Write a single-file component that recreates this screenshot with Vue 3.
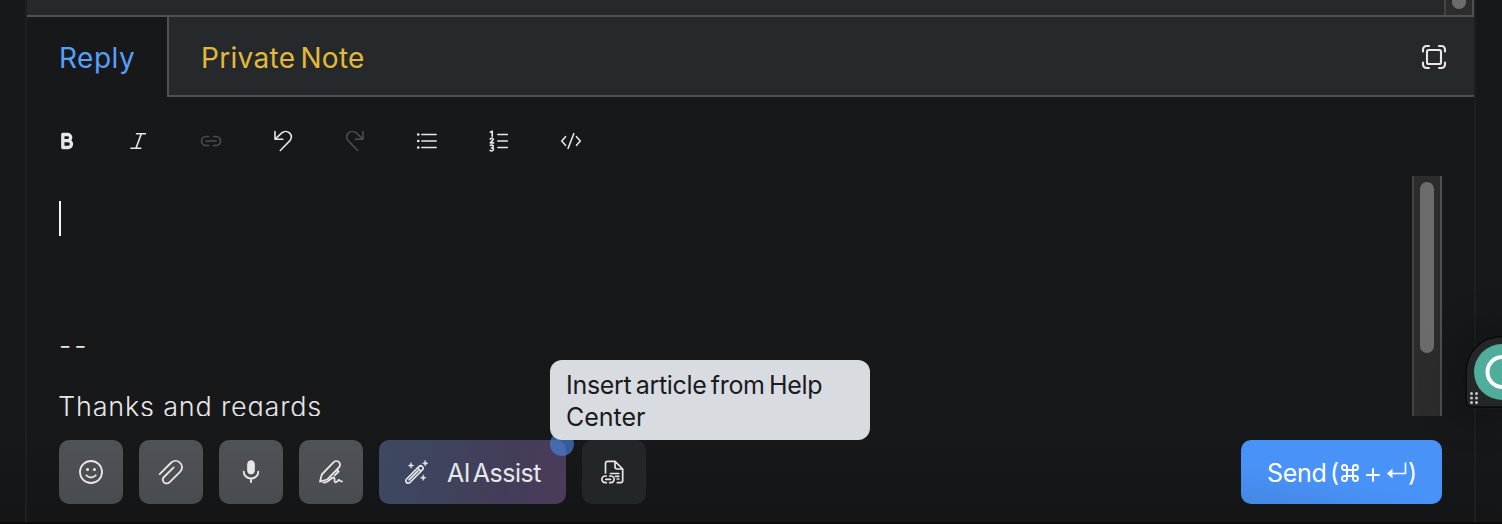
<script setup>
import { ref } from 'vue'

const signature = ['--', 'Thanks and regards']
const draft = ref('')
</script>

<template>
  <main class="page">
    <section class="card">
      <div class="thread"><div class="track thread-track"><i class="thumb"></i></div></div>

      <header class="tabs">
        <button class="tab active"><span class="t-reply">Reply</span></button>
        <div class="rest">
          <button class="tab note"><span class="t-note">Private Note</span></button>
          <button class="expand">
            <svg width="32" height="32" viewBox="0 0 32 32" class="ic" stroke-width="2.1">
              <rect x="9" y="9" width="14" height="14" rx="1.8" />
              <path d="M5 10.5V8.500A3.500 3.500 0 0 1 8.500 5H11M21 5h2.500A3.500 3.500 0 0 1 27 8.500v2M27 21.500v2a3.500 3.500 0 0 1-3.500 3.500H21M11 27H8.500A3.500 3.500 0 0 1 5 23.500v-2" />
            </svg>
          </button>
        </div>
      </header>

      <nav class="toolbar">
        <button class="tool">
          <svg width="24" height="24" viewBox="0 0 24 24" class="ic" stroke-width="3.3">
            <path d="M7.800 5.500V18.500M7.800 5.500H12.600a3.100 3.100 0 0 1 0 6.200H7.800M7.800 11.700h5.300a3.400 3.400 0 0 1 0 6.800H7.800" />
          </svg>
        </button>
        <button class="tool">
          <svg width="24" height="24" viewBox="0 0 24 24" class="ic" stroke-width="1.6">
            <path d="M9.500 4.800H18.500M4 19.300H13.800M14.300 4.800 9 19.300" />
          </svg>
        </button>
        <button class="tool off">
          <svg width="24" height="24" viewBox="0 0 24 24" class="ic" stroke-width="1.600">
            <path d="M9.500 7.500H7a4.500 4.500 0 0 0 0 9H9.500M14.500 7.500H17a4.500 4.500 0 0 1 0 9H14.500M7 12H17" />
          </svg>
        </button>
        <button class="tool">
          <svg width="24" height="24" viewBox="0 0 24 24" class="ic" stroke-width="1.600">
            <path d="M4 2.500V10.300H11.800M4.200 10.100 10.500 4.200C13 1.900 16.500 1.900 18.700 4.100S20.900 9.700 18.700 11.900L9.300 21.500" />
          </svg>
        </button>
        <button class="tool off">
          <svg width="24" height="24" viewBox="0 0 24 24" class="ic" stroke-width="1.600">
            <path d="M20 2.500V10.300H12.200M19.800 10.100 13.500 4.200C11 1.900 7.500 1.900 5.300 4.100S3.100 9.700 5.300 11.900L14.700 21.500" />
          </svg>
        </button>
        <button class="tool">
          <svg width="24" height="24" viewBox="0 0 24 24" class="ic" stroke-width="1.500">
            <path d="M6.800 5.500H21.200M6.800 12H21.200M6.800 18.500H21.200" />
            <path d="M3.200 5.500h.1M3.200 12h.1M3.200 18.500h.1" stroke-width="2.600" />
          </svg>
        </button>
        <button class="tool">
          <svg width="24" height="24" viewBox="0 0 24 24" class="ic" stroke-width="1.500">
            <path d="M10.800 5.500H20.400M10.800 12H20.400M10.800 18.500H20.400" />
            <path d="M3.300 3.200 5.200 2.200V7.300M3.300 10Q4 9.100 5.100 9.300 6.700 9.700 5.900 11L3.400 13.900H6.500M3.400 16.300Q6.500 15.500 6.100 17.400 5.800 18.700 4.600 18.800 6.500 18.900 6.400 20.400 5.900 22.500 3.200 21.500" stroke-width="1.7" />
          </svg>
        </button>
        <button class="tool">
          <svg width="24" height="24" viewBox="0 0 24 24" class="ic" stroke-width="1.600">
            <path d="M6.500 7.700 2.700 12l3.800 4.300M17.500 7.700l3.800 4.300-3.800 4.300M14.800 4.700 9.100 19.300" />
          </svg>
        </button>
      </nav>

      <div class="editor">
        <div class="content">
          <p class="line caret">{{ draft }}</p>
          <p class="line dashes">{{ signature[0] }}</p>
          <p class="line thanks">{{ signature[1] }}</p>
        </div>
        <div class="track"><i class="thumb"></i></div>
      </div>

      <footer class="actions">
        <button class="sq">
          <svg width="32" height="32" viewBox="0 0 32 32" class="ic" stroke-width="1.800">
            <circle cx="16" cy="16" r="11" /><path d="M11.300 19.300Q16 23.600 20.700 19.300" />
            <path d="M12.500 13.500h.1M19.400 13.500h.1" stroke-width="3" />
          </svg>
        </button>
        <button class="sq">
          <svg width="32" height="32" viewBox="0 0 32 32" class="ic" stroke-width="1.800">
            <path d="M4.700 18.100 15.800 7C18.300 4.400 22 4.300 24.600 6.400C27.800 9 27.800 13 25 15.800L14.700 26.100C12.900 27.900 10.300 27.900 8.900 26.300S7.500 22.500 9 21L18.700 11.400" />
          </svg>
        </button>
        <button class="sq">
          <svg width="32" height="32" viewBox="0 0 32 32" class="ic" stroke-width="1.900">
            <rect x="12.700" y="4.700" width="6.600" height="13.300" rx="3.300" fill="currentColor" stroke-width="1" />
            <path d="M8.700 15.800a7.300 6.700 0 0 0 14.600 0M16 22.700V26" />
          </svg>
        </button>
        <button class="sq">
          <svg width="32" height="32" viewBox="0 0 32 32" class="ic" stroke-width="1.800">
            <path d="M5 25.700 6.800 18.500 18.700 6.200C20.200 4.700 22.500 4.700 24 6.200S25.400 10 23.900 11.500L12.300 23.500 5 25.700M21.800 13.700 23.600 15.500 19.800 19.400" />
            <path d="M8.500 26.500C13 27.300 16 21.700 18.200 21.500C21 21.500 18.300 25.700 20.300 26.300C22.200 26.700 22.800 24 24 24C25 24.100 24.500 25.300 27 25.400" />
          </svg>
        </button>
        <button class="ai">
          <svg width="32" height="32" viewBox="0 0 32 32" class="ic" stroke-width="1.700">
            <path d="M5.600 23 17.900 10.700C19 9.600 20.400 9.600 21.300 10.500S22.400 12.900 21.300 14L9 26.300C7.800 27.400 6.500 27.400 5.500 26.500S4.500 24.200 5.600 23M17.200 12.500 19.500 14.800M8 23.800 17 14.800" />
            <path d="M24.200 4.500l.8 2 2 .8-2 .8-.8 2-.8-2-2-.8 2-.8zM10 6.700l.8 2 2 .8-2 .8-.8 2-.8-2-2-.8 2-.8zM22.200 19l.8 2 2 .8-2 .8-.8 2-.8-2-2-.8 2-.8z" fill="currentColor" stroke-width=".5" />
          </svg>
          <span class="t-ai">AI Assist</span>
          <i class="ping"></i>
        </button>
        <button class="sq dim">
          <svg width="32" height="32" viewBox="0 0 32 32" class="ic" stroke-width="1.700">
            <path d="M7.500 17V7.500A2.200 2.200 0 0 1 9.700 5.300H17L24.700 13V24.500A2.200 2.200 0 0 1 22.500 26.700H19.300M17 5.300V10.800A2.200 2.200 0 0 0 19.200 13H24.700M12.500 17.500H20.800M17.500 20.300H20.800M19.300 23H20.800" />
            <path d="M8.300 20H7.200a3.300 3.300 0 0 0 0 6.700H8.300M11.700 20H12.800a3.300 3.300 0 0 1 0 6.700H11.700M7.700 23.300H12.500" />
          </svg>
          <div class="tooltip"><span class="tip1">Insert article from Help</span><br /><span class="tip2">Center</span></div>
        </button>
        <button class="send">
          <span class="t-send">Send</span>
          <span class="paren">(</span>
          <svg width="18" height="18" viewBox="0 0 18 18" class="ic cmd" stroke-width="1.900">
            <path d="M6 6H12V12H6ZM6 6V3.500A2.500 2.500 0 1 0 3.500 6ZM12 6H14.500A2.500 2.500 0 1 0 12 3.500ZM12 12V14.500A2.500 2.500 0 1 0 14.500 12ZM6 12H3.500A2.500 2.500 0 1 0 6 14.500Z" />
          </svg>
          <svg width="12" height="12" viewBox="0 0 12 12" class="ic plus" stroke-width="2"><path d="M0 6H12M6 0V12" /></svg>
          <svg width="20" height="16" viewBox="0 0 20 16" class="ic enter" stroke-width="1.600">
            <path d="M18.500 0V10.500H4" /><path d="M0 10.500 5.500 5.500V15.500Z" fill="currentColor" stroke="none" />
          </svg>
          <span class="paren close">)</span>
        </button>
      </footer>
    </section>

    <aside class="assistant">
      <svg width="38" height="74" viewBox="0 0 38 74">
        <path d="M38 1.500C17 1.500 2 17 2 38V65Q2 72 9 72H38" fill="#252627" stroke="#08090a" stroke-width="1.500" />
        <circle cx="38" cy="37" r="28" fill="#50ac9b" />
        <circle cx="38.500" cy="37" r="15" fill="none" stroke="#fff" stroke-width="4" />
        <g fill="#c5c5c6">
          <circle cx="7.500" cy="58.500" r="1.500" /><circle cx="12.500" cy="58.500" r="1.500" />
          <circle cx="7.500" cy="63" r="1.500" /><circle cx="12.500" cy="63" r="1.500" />
          <circle cx="7.500" cy="67.500" r="1.500" /><circle cx="12.500" cy="67.500" r="1.500" />
        </g>
      </svg>
    </aside>
  </main>
</template>

<style>
body { background: #17181a; overflow: hidden; }
</style>

<style scoped>
* { box-sizing: border-box; }
.page {
  position: relative;
  width: 1502px;
  height: 524px;
  overflow: hidden;
  padding: 0 26px 0 25px;
  color: #e6e7e9;
  background: linear-gradient(#17181a 0 430px, #141517 522px, #0b0a0b 522px);
  font-family: Inter, "Noto Sans", sans-serif;
}
button { border: 0; padding: 0; margin: 0; background: none; color: inherit; font: inherit; }
.ic { display: block; flex: none; fill: none; stroke: currentColor; stroke-linecap: round; stroke-linejoin: round; overflow: visible; }
.card { height: 522px; border: solid #1e1f21; border-width: 0 2px; display: flex; flex-direction: column; width: 1451px; }
.thread { height: 17px; border-bottom: 2px solid #4f5155; background: #26292c; display: flex; justify-content: flex-end; }
.track { width: 30px; background: #2c2c2c; border: solid #434343; border-width: 0 2px; border-right-color: #505051; display: flex; justify-content: center; flex: none; }
.thumb { display: block; width: 14px; border-radius: 7px; background: #6c6c6c; }
.thread-track .thumb { height: 24px; margin-top: -15px; }
.tabs { height: 80px; display: flex; flex: none; }
.tab { display: flex; align-items: center; font-size: 28px; line-height: 40px; white-space: nowrap; }
.tab span { display: block; }
.active { width: 140px; padding: 2px 0 0 32px; color: #579ffb; }
.rest { flex: 1; display: flex; justify-content: space-between; background: #26292c; border: solid #4f5155; border-width: 0 0 2px 2px; }
.note { padding: 4px 0 0 32px; color: #e3b93c; }
.expand { display: flex; align-items: center; margin-right: 24px; padding-top: 2px; }
.toolbar { height: 79px; display: flex; gap: 48px; padding: 32px 0 0 28px; flex: none; }
.tool { width: 24px; height: 24px; }
.off { color: #4b4d50; }
.editor { height: 240px; margin: 0 32px; display: flex; flex: none; }
.content { flex: 1; overflow: hidden; padding-top: 25px; }
.line { margin: 0; font-size: 27px; font-weight: 300; line-height: 36px; white-space: pre; }
.caret { height: 35px; border-left: 2px solid #f4f4f4; }
.dashes { margin-top: 92px; letter-spacing: 3px; }
.thanks { margin: 25px 0 0 -1px; letter-spacing: .8px; }
.editor .thumb { height: 171px; margin-top: 6px; }
.actions { margin: 24px 32px 0; display: flex; gap: 16px; height: 64px; }
.sq { width: 64px; height: 64px; border-radius: 10px; background: linear-gradient(#4f5256, #484b4f); display: grid; place-items: center; position: relative; }
.dim { background: #232629; }
.ai { position: relative; width: 187px; height: 64px; border-radius: 10px; background: linear-gradient(105deg, #3c4a61, #433d59 65%, #4b3b5b); display: flex; align-items: center; padding-left: 22px; font-size: 25px; }
.t-ai { margin-left: 14px; white-space: nowrap; padding-top: 2px; letter-spacing: -.45px; word-spacing: -4px; }
.ping { position: absolute; left: 171px; top: -8px; width: 24px; height: 24px; border-radius: 50%; background: rgba(72, 130, 220, .65); }
.tooltip { position: absolute; left: -32px; top: -80px; width: 320px; height: 80px; border-radius: 12px; background: #d8dbe0; color: #191b1e; padding: 9px 16px; text-align: left; font-size: 25px; line-height: 32px; font-weight: 400; white-space: nowrap; z-index: 2; }
.tip1 { letter-spacing: -.3px; word-spacing: -2.5px; }
.send { margin-left: auto; width: 201px; height: 64px; border-radius: 10px; background: linear-gradient(10deg, #4487e2, #4992f8 40%); color: #fff; display: flex; align-items: center; padding-left: 26px; font-size: 25px; }
.t-send { width: 58px; white-space: nowrap; padding-top: 2px; letter-spacing: -.3px; }
.paren { width: 8px; margin-left: 5px; }
.cmd { margin-left: 3px; margin-top: 2px; }
.plus { margin-left: 8px; margin-top: 6px; }
.enter { margin-left: 8px; margin-top: -2px; }
.close { margin-left: 1px; }
.t-reply { letter-spacing: .5px; }
.t-note { letter-spacing: .3px; word-spacing: -3px; }
.assistant { position: absolute; left: 1464px; top: 335px; width: 38px; height: 74px; box-shadow: 0 0 34px 10px rgba(8, 9, 10, .25); border-radius: 36px 0 0 8px; }
.assistant svg { display: block; }
</style>
